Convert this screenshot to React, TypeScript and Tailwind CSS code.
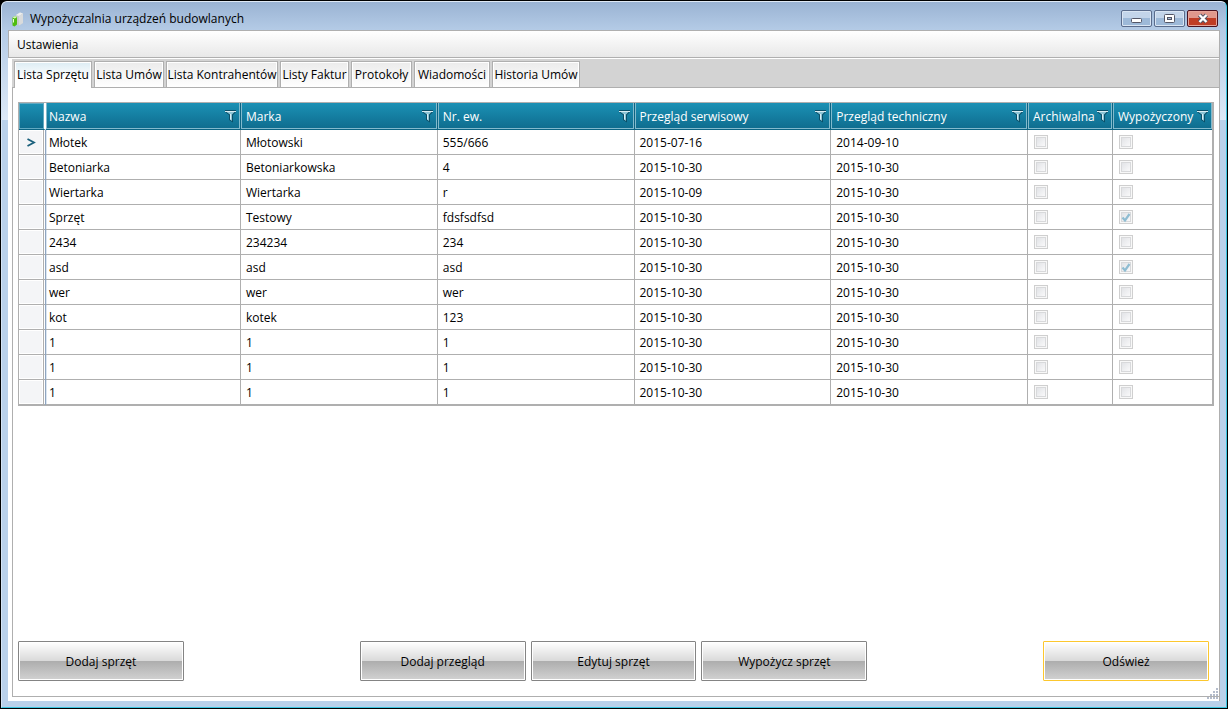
import { useState } from 'react';
import clsx from 'clsx';

type Equipment = {
  name: string;
  brand: string;
  number: string;
  service: string;
  technical: string;
  archived: boolean;
  rented: boolean;
};

const tabs = [
  { label: 'Lista Sprzętu', width: 'w-[78px]' },
  { label: 'Lista Umów', width: 'w-[70px]' },
  { label: 'Lista Kontrahentów', width: 'w-[112px]' },
  { label: 'Listy Faktur', width: 'w-[69px]' },
  { label: 'Protokoły', width: 'w-[61px]' },
  { label: 'Wiadomości', width: 'w-[76px]' },
  { label: 'Historia Umów', width: 'w-[88px]' },
];

const columns = [
  { label: 'Nazwa', width: 'w-[195px]' },
  { label: 'Marka', width: '' },
  { label: 'Nr. ew.', width: '' },
  { label: 'Przegląd serwisowy', width: '' },
  { label: 'Przegląd techniczny', width: '' },
  { label: 'Archiwalna', width: 'w-[85px]' },
  { label: 'Wypożyczony', width: 'w-[99px]' },
];

const item = (
  name: string,
  brand: string,
  number: string,
  service = '2015-10-30',
  technical = '2015-10-30',
  rented = false
): Equipment => ({ name, brand, number, service, technical, archived: false, rented });

const equipment: Equipment[] = [
  item('Młotek', 'Młotowski', '555/666', '2015-07-16', '2014-09-10'),
  item('Betoniarka', 'Betoniarkowska', '4'),
  item('Wiertarka', 'Wiertarka', 'r', '2015-10-09'),
  item('Sprzęt', 'Testowy', 'fdsfsdfsd', '2015-10-30', '2015-10-30', true),
  item('2434', '234234', '234'),
  item('asd', 'asd', 'asd', '2015-10-30', '2015-10-30', true),
  item('wer', 'wer', 'wer'),
  item('kot', 'kotek', '123'),
  item('1', '1', '1'),
  item('1', '1', '1'),
  item('1', '1', '1'),
];

const actions = [
  { label: 'Dodaj sprzęt', column: 'col-start-1' },
  { label: 'Dodaj przegląd', column: 'col-start-3' },
  { label: 'Edytuj sprzęt', column: 'col-start-4' },
  { label: 'Wypożycz sprzęt', column: 'col-start-5' },
  { label: 'Odśwież', column: 'col-start-7', focused: true },
];

const AppIcon = () => (
  <svg width="12" height="15" viewBox="0 0 12 15" aria-hidden="true">
    <path d="M4 3 8 0.5 11 1.5V11L7 13.5 4 12Z" fill="#c9cccd" />
    <path d="M4 3 8 0.5 11 1.5 7 4Z" fill="#eceeee" />
    <path d="M7 4 11 1.5V11L7 13.5Z" fill="#d9dbdc" />
    <path d="M0.5 5.5 3 4 5 5V12.5L2.5 14.5 0.5 13.5Z" fill="#4fbd10" />
    <path d="M0.5 5.5 3 4 5 5 2.8 6.5Z" fill="#d4f5b4" />
    <path d="M1.5 7V10.5" stroke="#eaffd8" strokeWidth="1" />
  </svg>
);

const FilterIcon = () => (
  <svg width="13" height="13" viewBox="0 0 13 13" aria-hidden="true">
    <path d="M1 0H12V2L9 5V12.5L5 10V5L1 2Z" fill="#0b4f68" />
    <path d="M1 1H12V2H1Z" fill="#d8edf3" />
    <path d="M2.5 2H10.5L8 4.5V11L6 9.5V4.5Z" fill="#8cc4d6" />
    <path d="M6 4H7V9.5H6Z" fill="#d8edf3" />
  </svg>
);

const windowButton =
  'flex h-[17px] w-[31px] items-center justify-center rounded-[2px] border border-[#5a6c8c] bg-linear-to-b from-[#c3d5ea] from-50% to-[#9db9d8] to-50% shadow-[inset_0_0_0_1px_#d9e5f3]';

const TitleBar = () => (
  <header className="flex h-7 items-start justify-between pr-[8px]">
    <div className="flex items-center gap-[6px] pt-[9px] pl-[10px]">
      <AppIcon />
      <h1>Wypożyczalnia urządzeń budowlanych</h1>
    </div>
    <div className="flex gap-[2px] pt-[8px]">
      <button type="button" aria-label="Minimalizuj" className={windowButton}>
        <svg width="11" height="11" viewBox="0 0 11 11">
          <rect x="0.5" y="5.5" width="10" height="4" rx="1" fill="#fff" stroke="#535666" />
        </svg>
      </button>
      <button type="button" aria-label="Maksymalizuj" className={windowButton}>
        <svg width="11" height="11" viewBox="0 0 11 11">
          <rect x="0.5" y="1.5" width="10" height="8" rx="1" fill="#fff" stroke="#535666" />
          <rect x="3.5" y="4.5" width="4" height="2" fill="#a9c0dc" stroke="#535666" />
        </svg>
      </button>
      <button
        type="button"
        aria-label="Zamknij"
        className="flex h-[17px] w-[31px] items-center justify-center rounded-[2px] border border-[#4a1220] bg-linear-to-b from-[#e0988c] from-50% to-[#bf3d25] to-50% shadow-[inset_0_0_0_1px_#e6a59a]"
      >
        <svg width="12" height="11" viewBox="0 0 12 11">
          <path d="M2.5 2 9.5 9M9.5 2 2.5 9" stroke="#535666" strokeWidth="4.4" />
          <path d="M2.5 2 9.5 9M9.5 2 2.5 9" stroke="#fff" strokeWidth="2.4" />
        </svg>
      </button>
    </div>
  </header>
);

const DisabledCheck = ({ checked, label }: { checked: boolean; label: string }) => (
  <span className="grid w-[14px]">
    <input
      type="checkbox"
      checked={checked}
      disabled
      readOnly
      aria-label={label}
      className="col-start-1 row-start-1 size-[14px] appearance-none border border-[#cfcfcf] bg-linear-to-br from-[#dcdee2] to-[#f8f8f9] to-80% shadow-[inset_0_0_0_1px_#f8f8f8,inset_0_0_0_2px_#d8d9db]"
    />
    {checked && (
      <svg
        width="14"
        height="14"
        viewBox="0 0 14 14"
        className="col-start-1 row-start-1"
        aria-hidden="true"
      >
        <path d="M3.5 7.5 6 10.5 10.5 4" stroke="#8fbdd2" strokeWidth="2.2" fill="none" />
      </svg>
    )}
  </span>
);

const cell = 'h-[25px] border-r border-b border-[#afafaf] p-0 last:border-r-0';
const textCell = 'h-[25px] border-r border-b border-[#afafaf] pt-[2px] pl-[5px]';

const EquipmentTable = () => (
  <table className="w-full table-fixed border-separate border-spacing-0 border border-r-2 border-[#afafaf] text-left">
    <thead>
      <tr>
        <th className="h-[27px] w-[27px] border-r-2 border-b border-r-white border-b-[#0b6483] bg-linear-to-b from-[#1b91b5] to-[#0e6c8e] p-0 shadow-[inset_0_0_0_1px_#62a9c1]" />
        {columns.map(({ label, width }, i) => (
          <th
            key={label}
            className={clsx(
              'h-[27px] border-r border-b border-[#0b6483] bg-linear-to-b from-[#1b91b5] to-[#0e6c8e] p-0 font-normal text-white shadow-[inset_1px_0_#82bacd,inset_-1px_-1px_#82bacd] last:border-r-0',
              width
            )}
          >
            <div
              className={clsx(
                'flex items-center justify-between pr-[3px]',
                i === 0 ? 'pl-[3px]' : 'pl-[5px]'
              )}
            >
              <span className="pt-[2px] font-medium whitespace-nowrap">{label}</span>
              <button type="button" aria-label={`Filtruj: ${label}`}>
                <FilterIcon />
              </button>
            </div>
          </th>
        ))}
      </tr>
    </thead>
    <tbody>
      {equipment.map((row, i) => (
        <tr key={i}>
          <td className="h-[25px] border-b border-[#afafaf] p-0">
            <div className="mr-[2px] flex h-6 items-center justify-center border-r border-[#afafaf] bg-[#f4f5f7] shadow-[inset_0_0_0_1px_#ffffff]">
              {i === 0 && (
                <svg width="9" height="9" viewBox="0 0 9 9" aria-label="Bieżący wiersz">
                  <path d="M0.5 1 7 4.5 0.5 8" stroke="#1a607c" strokeWidth="1.8" fill="none" />
                </svg>
              )}
            </div>
          </td>
          <td className="h-[25px] border-r border-b border-[#afafaf] pt-[2px] pl-[3px] shadow-[inset_1px_0_#dbe6f1,-1px_0_#8fa5c0]">
            {row.name}
          </td>
          <td className={textCell}>{row.brand}</td>
          <td className={textCell}>{row.number}</td>
          <td className={textCell}>{row.service}</td>
          <td className={textCell}>{row.technical}</td>
          <td className={cell}>
            <div className="pl-[6px]">
              <DisabledCheck checked={row.archived} label={`Archiwalna: ${row.name}`} />
            </div>
          </td>
          <td className={cell}>
            <div className="pl-[6px]">
              <DisabledCheck checked={row.rented} label={`Wypożyczony: ${row.name}`} />
            </div>
          </td>
        </tr>
      ))}
    </tbody>
  </table>
);

const ResizeGrip = () => (
  <svg width="12" height="12" viewBox="0 0 12 12" className="absolute right-0 bottom-px">
    <g fill="#b4bccb">
      <path d="M9 0h2v2h-2zM9 3h2v2h-2zM6 3h2v2h-2zM9 6h2v2h-2zM6 6h2v2h-2zM3 6h2v2h-2z" />
      <path d="M9 9h2v2h-2zM6 9h2v2h-2zM3 9h2v2h-2zM0 9h2v2h-2z" />
    </g>
  </svg>
);

export default function App() {
  const [active, setActive] = useState(0);

  return (
    <div className="flex min-h-screen flex-col bg-black p-px font-['Open_Sans','Noto_Sans',sans-serif] text-[12px] leading-4 text-black">
      <div className="flex flex-1 flex-col rounded-t-[6px] border border-t-[#dfe9f5] border-r-[#3cc6e0] border-b-[#3cc6e0] border-l-[#d5e4f4] bg-[#bad1ea] bg-[linear-gradient(#9ab3d3,#b4cbe6_28px,#dde9f7_118px,#bad1ea_118px)]">
        <TitleBar />
        <div className="relative mr-[6px] mb-[6px] ml-[6px] flex flex-1 flex-col border-t border-r border-[#afafaf] bg-white">
          <nav className="flex h-[27px] shrink-0 items-center border-b border-l border-[#afafaf] bg-linear-to-b from-white to-[#e8e8e8] pt-[2px] pl-[8px]">
            <button type="button">Ustawienia</button>
          </nav>
          <div className="mt-px mb-[4px] ml-[4px] flex flex-1 flex-col border-b border-[#afafaf]">
            <div
              role="tablist"
              className="flex h-[29px] shrink-0 items-end gap-[2px] border-b border-[#afafaf] bg-[#d3d3d3] pl-[2px]"
            >
              {tabs.map(({ label, width }, i) => (
                <button
                  key={label}
                  type="button"
                  role="tab"
                  aria-selected={active === i}
                  onClick={() => setActive(i)}
                  className={clsx(
                    'shrink-0 border border-b-0 border-[#afafaf] text-center whitespace-nowrap shadow-[inset_1px_1px_#fff,inset_-1px_0_#fff]',
                    width,
                    active === i
                      ? '-mb-px h-[27px] bg-linear-to-b from-[#dcecf4] to-white to-60%'
                      : 'h-[26px] bg-linear-to-b from-[#ebebeb] to-white pt-px'
                  )}
                >
                  {label}
                </button>
              ))}
            </div>
            <main className="flex flex-1 flex-col justify-between border-l border-[#afafaf] pt-[14px] pr-[5px] pb-[15px] pl-[5px]">
              <EquipmentTable />
              <div className="mr-[5px] grid grid-cols-7 gap-[5px]">
                {actions.map(({ label, column, focused }) => (
                  <button
                    key={label}
                    type="button"
                    className={clsx(
                      'h-10 rounded-[1px] border bg-[linear-gradient(#ffffff,#d9d9d9_50%,#adadad_50%,#d2d2d2)] pt-px shadow-[inset_0_0_0_1px_#fff]',
                      column,
                      focused ? 'border-[#fcc72e]' : 'border-[#848484]'
                    )}
                  >
                    {label}
                  </button>
                ))}
              </div>
            </main>
          </div>
          <ResizeGrip />
        </div>
      </div>
    </div>
  );
}
